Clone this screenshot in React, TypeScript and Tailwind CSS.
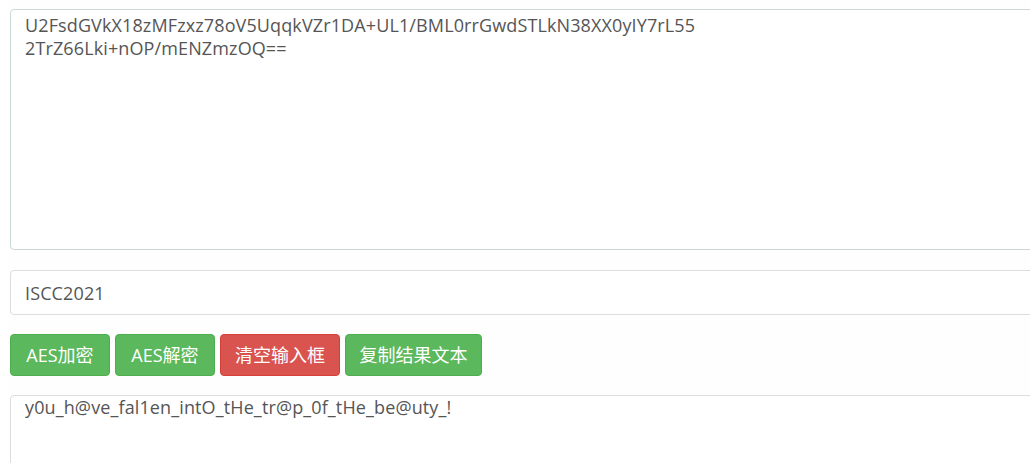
export default function App() {
  const cipher =
    "U2FsdGVkX18zMFzxz78oV5UqqkVZr1DA+UL1/BML0rrGwdSTLkN38XX0yIY7rL55\n2TrZ66Lki+nOP/mENZmzOQ==";
  const font = "font-['Open_Sans','Noto_Sans_CJK_SC',sans-serif]";

  return (
    <div className={`h-[463px] overflow-hidden bg-white pl-[8px] ${font}`}>
      <div className="h-full w-[1060px] bg-[#fefefe] pl-[2px] pt-[9px]">
        <textarea
          readOnly
          value={cipher}
          className="block h-[241px] w-[1060px] resize-none rounded-[4px] border border-[#cbd8d8] bg-white px-[14px] py-[4px] text-[18px] leading-[23px] tracking-[0.12px] text-[#555] outline-none"
        />
        <input
          readOnly
          value="ISCC2021"
          className="mt-[20px] block h-[45px] w-[1060px] rounded-[4px] border border-[#ddd] bg-white px-[14px] text-[18px] tracking-[0.12px] text-[#555] outline-none"
        />
        <div className="mt-[19px] flex gap-[5px]">
          <button className="h-[42px] w-[100px] rounded-[4px] border border-[#4cae4c] bg-[#5cb85c] text-[18px] text-white">
            AES加密
          </button>
          <button className="h-[42px] w-[100px] rounded-[4px] border border-[#4cae4c] bg-[#5cb85c] text-[18px] text-white">
            AES解密
          </button>
          <button className="h-[42px] w-[120px] rounded-[4px] border border-[#d43f3a] bg-[#d9534f] text-[18px] text-white">
            清空输入框
          </button>
          <button className="h-[42px] w-[137px] rounded-[4px] border border-[#4cae4c] bg-[#5cb85c] text-[18px] text-white">
            复制结果文本
          </button>
        </div>
        <textarea
          readOnly
          value="y0u_h@ve_fal1en_intO_tHe_tr@p_0f_tHe_be@uty_!"
          className="mt-[19px] block h-[100px] w-[1060px] resize-none rounded-[4px] border border-[#ddd] bg-white px-[14px] py-0 text-[18px] leading-[23px] tracking-[0.12px] text-[#555] outline-none"
        />
      </div>
    </div>
  );
}
